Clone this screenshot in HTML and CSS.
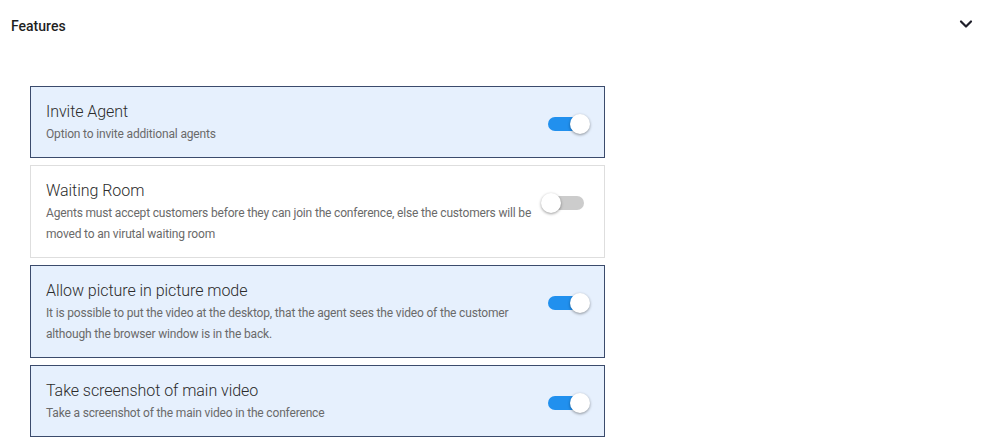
FILE: index.html
```html
<!DOCTYPE html>
<html>
<head>
<meta charset="utf-8">
<link rel="stylesheet" href="styles.css">
</head>
<body>
<div class="panel">
  <div class="panel-header">
    <span class="panel-title">Features</span>
    <svg class="chevron" width="14" height="10" viewBox="0 0 14 10"><path d="M2 2.5 L7 7.5 L12 2.5" fill="none" stroke="#1e1e2a" stroke-width="2.2" stroke-linecap="round" stroke-linejoin="round"/></svg>
  </div>
  <div class="feature-list">
    <div class="feature on">
      <div class="feature-text">
        <div class="feature-title">Invite Agent</div>
        <div class="feature-desc">Option to invite additional agents</div>
      </div>
      <div class="toggle"><span class="track"></span><span class="knob"></span></div>
    </div>
    <div class="feature">
      <div class="feature-text">
        <div class="feature-title">Waiting Room</div>
        <div class="feature-desc">Agents must accept customers before they can join the conference, else the customers will be moved to an virutal waiting room</div>
      </div>
      <div class="toggle"><span class="track"></span><span class="knob"></span></div>
    </div>
    <div class="feature on">
      <div class="feature-text">
        <div class="feature-title">Allow picture in picture mode</div>
        <div class="feature-desc">It is possible to put the video at the desktop, that the agent sees the video of the customer although the browser window is in the back.</div>
      </div>
      <div class="toggle"><span class="track"></span><span class="knob"></span></div>
    </div>
    <div class="feature on">
      <div class="feature-text">
        <div class="feature-title">Take screenshot of main video</div>
        <div class="feature-desc">Take a screenshot of the main video in the conference</div>
      </div>
      <div class="toggle"><span class="track"></span><span class="knob"></span></div>
    </div>
  </div>
</div>
</body>
</html>
```

FILE: styles.css
```css
html, body {
  margin: 0;
  padding: 0;
  background: #ffffff;
  font-family: Roboto, "Liberation Sans", Arial, sans-serif;
}

.panel-header {
  height: 50px;
  display: flex;
  align-items: center;
  justify-content: space-between;
  padding: 1px 10px 0 11px;
  box-sizing: border-box;
}

.panel-title {
  font-size: 14px;
  font-weight: 500;
  color: #1f1f1f;
}

.chevron {
  display: block;
  margin-top: -3px;
}

.feature-list {
  padding: 36px 0 0 30px;
  width: 575px;
  display: flex;
  flex-direction: column;
  gap: 7px;
}

.feature {
  display: flex;
  align-items: flex-start;
  border: 1px solid #dedede;
  background: #ffffff;
  padding: 13px 14px 12px 15px;
}

.feature.on {
  background: #e6f0fd;
  border-color: #3b4b6c;
}

.feature-text {
  flex: 1;
  min-width: 0;
}

.feature-title {
  font-size: 16px;
  font-weight: 300;
  line-height: 24px;
  letter-spacing: -0.05px;
  color: #2b2b2b;
}

.feature-desc {
  font-size: 12px;
  line-height: 21px;
  letter-spacing: -0.17px;
  color: #6a6a6a;
}

.toggle {
  position: relative;
  width: 49px;
  height: 20px;
  margin-top: 14px;
  flex: none;
}

.track {
  position: absolute;
  left: 7px;
  top: 3px;
  width: 36px;
  height: 14px;
  border-radius: 7px;
  background: #cccccc;
}

.knob {
  position: absolute;
  left: 0;
  top: 0;
  width: 20px;
  height: 20px;
  border-radius: 50%;
  background: #ffffff;
  box-shadow: 0 1px 3px rgba(0, 0, 0, 0.4);
}

.feature.on .track {
  background: #2190ee;
}

.feature.on .knob {
  left: 29px;
}
```
